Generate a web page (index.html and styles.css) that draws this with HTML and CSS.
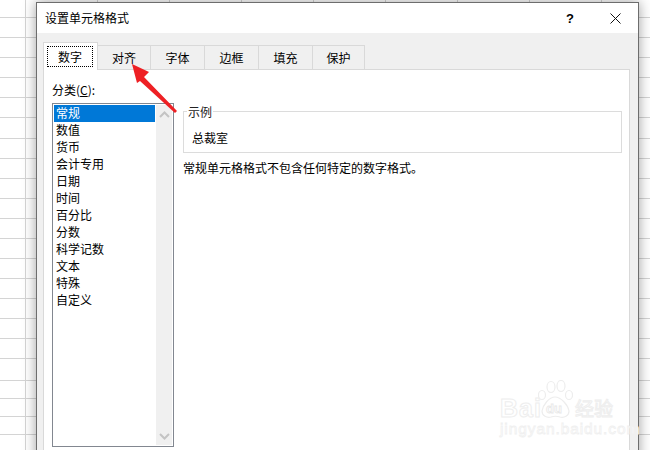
FILE: index.html
```html
<!DOCTYPE html>
<html lang="zh-CN">
<head>
<meta charset="utf-8">
<title>设置单元格格式</title>
<link rel="stylesheet" href="styles.css">
</head>
<body>
<div class="sheet">
  <div class="grid">
    <div class="r r18"></div>
    <div class="r"></div><div class="r"></div><div class="r"></div><div class="r"></div><div class="r"></div>
    <div class="r r21"></div>
    <div class="r"></div><div class="r"></div><div class="r"></div><div class="r"></div><div class="r"></div>
    <div class="r"></div><div class="r"></div><div class="r"></div><div class="r"></div><div class="r"></div><div class="r"></div>
    <div class="r r22"></div>
    <div class="r r18"></div><div class="r r18"></div><div class="r r18"></div>
  </div>

  <div class="dialog">
    <div class="titlebar">
      <span class="title">设置单元格格式</span>
      <span class="help">?</span>
      <svg class="close" width="11" height="11" viewBox="0 0 11 11"><path d="M0.5 0.5L10.5 10.5M10.5 0.5L0.5 10.5" stroke="#111" stroke-width="1" fill="none"/></svg>
    </div>
    <div class="body">
      <div class="tabs">
        <div class="tab tab-active"><span class="focus">数字</span></div>
        <div class="tab w53">对齐</div>
        <div class="tab">字体</div>
        <div class="tab">边框</div>
        <div class="tab">填充</div>
        <div class="tab w52">保护</div>
      </div>
      <div class="panel">
        <div class="left">
          <div class="label">分类(<u>C</u>):</div>
          <div class="list">
            <div class="items">
              <div class="item selected">常规</div>
              <div class="item">数值</div>
              <div class="item">货币</div>
              <div class="item">会计专用</div>
              <div class="item">日期</div>
              <div class="item">时间</div>
              <div class="item">百分比</div>
              <div class="item">分数</div>
              <div class="item">科学记数</div>
              <div class="item">文本</div>
              <div class="item">特殊</div>
              <div class="item">自定义</div>
            </div>
            <div class="scroll">
              <svg width="11" height="7" viewBox="0 0 11 7"><path d="M1 6L5.500 1.500L10 6" stroke="#c4c4c4" stroke-width="2" fill="none"/></svg>
              <svg width="11" height="7" viewBox="0 0 11 7"><path d="M1 1L5.500 5.500L10 1" stroke="#c4c4c4" stroke-width="2" fill="none"/></svg>
            </div>
          </div>
        </div>
        <div class="right">
          <div class="sample">
            <span class="legend">示例</span>
            <div class="sample-value">总裁室</div>
          </div>
          <div class="desc">常规单元格格式不包含任何特定的数字格式。</div>
        </div>
      </div>
    </div>
  </div>

  <svg class="arrow" width="60" height="60" viewBox="0 0 60 60"><polygon points="2,3 19,11 14,16 47,50 45,52 10,20 7,22" fill="#ee2024"/></svg>

  <div class="mark">
    <div class="mark-top">
      <span class="mark-bai">Bai</span>
      <svg class="paw" width="35" height="39" viewBox="0 0 35 39" fill="#fff" stroke="#ededed" stroke-width="1.200">
        <ellipse cx="4" cy="15" rx="3.500" ry="4.500"/>
        <ellipse cx="13" cy="7" rx="4" ry="5.500"/>
        <ellipse cx="23" cy="6" rx="4" ry="5.500"/>
        <ellipse cx="31" cy="15" rx="3.500" ry="4.500"/>
        <path d="M17 17C11 17 5 25 4 31C4 36 9 38 13 37C16 36 19 36 22 37C26 38 31 36 31 31C30 25 23 17 17 17Z"/>
        <text x="8" y="33" class="paw-du">du</text>
      </svg>
      <span class="mark-jy">经验</span>
    </div>
    <div class="mark-url">jingyan.baidu.com</div>
  </div>
</div>
</body>
</html>
```
FILE: styles.css
```css
* { box-sizing: border-box; }
html, body { margin: 0; padding: 0; }
body {
  width: 650px;
  height: 450px;
  overflow: hidden;
  font-family: "Noto Sans CJK SC", "Liberation Sans", sans-serif;
  font-size: 12px;
  color: #000;
}
.sheet {
  position: relative;
  width: 650px;
  height: 450px;
  overflow: hidden;
  background-color: #fff;
  background-image: repeating-linear-gradient(90deg, transparent 0, transparent 25px, #d4d4d4 25px, #d4d4d4 26px, transparent 26px, transparent 72px);
}
.grid { display: flex; flex-direction: column; }
.r { height: 20px; border-bottom: 1px solid #d4d4d4; flex: none; }
.r18 { height: 18px; }
.r21 { height: 21px; }
.r22 { height: 22px; }

.dialog {
  position: absolute;
  left: 36px;
  top: 2px;
  width: 603px;
  height: 500px;
  background: #f0f0f0;
  border: 1px solid #6d6d6d;
  box-shadow: 0 0 12px rgba(0, 0, 0, 0.38);
}
.titlebar {
  display: flex;
  align-items: center;
  height: 30px;
  background: #fff;
  padding: 0 17px 0 8px;
}
.title { flex: 1; line-height: 14px; font-size: 12px; padding-bottom: 1px; }
.help { font-family: "Liberation Sans", sans-serif; font-weight: bold; font-size: 13px; margin-right: 36px; }
.close { display: block; }

.body { padding: 9px 8px 0 6px; }
.tabs { display: flex; align-items: flex-end; height: 27px; }
.tab {
  width: 54px;
  height: 24px;
  display: flex;
  align-items: center;
  justify-content: center;
  border-top: 1px solid #d9d9d9;
  border-right: 1px solid #d9d9d9;
  line-height: 14px;
}
.w53 { width: 53px; }
.w52 { width: 52px; }
.tab-active {
  position: relative;
  z-index: 1;
  width: 55px;
  height: 28px;
  margin-bottom: -1px;
  background: #fff;
  border: 1px solid #d9d9d9;
  border-bottom: 0;
  padding: 3px 4px 3px 3px;
}
.focus {
  display: flex;
  align-items: center;
  justify-content: center;
  width: 47px;
  height: 21px;
  border: 1px dotted #000;
}
.panel {
  display: flex;
  gap: 9px;
  width: 587px;
  height: 400px;
  background: #fff;
  border: 1px solid #d9d9d9;
  padding: 13px 0 0 8px;
}
.left { width: 122px; flex: none; }
.label { line-height: 14px; margin-bottom: 6px; }
.list {
  display: flex;
  gap: 1px;
  width: 122px;
  height: 344px;
  border: 1px solid #828790;
  padding: 1px 0 1px 1px;
}
.items { width: 101px; }
.item { height: 17px; line-height: 15px; padding-left: 2px; }
.selected { background: #0078d7; color: #fff; }
.scroll {
  display: flex;
  flex-direction: column;
  justify-content: space-between;
  align-items: center;
  width: 16px;
  padding: 6px 0 5px;
  background: #f0f0f0;
}
.scroll svg { display: block; }

.right { width: 439px; flex: none; padding-top: 28px; }
.sample {
  position: relative;
  height: 42px;
  border: 1px solid #dcdcdc;
  padding: 19px 0 0 8px;
}
.legend {
  position: absolute;
  left: 3px;
  top: -7px;
  padding: 0 1px;
  line-height: 14px;
  background: #fff;
  color: #222;
}
.sample-value { line-height: 14px; }
.desc { margin-top: 8px; line-height: 14px; white-space: nowrap; }

.arrow { position: absolute; left: 130px; top: 61px; }

.mark {
  position: absolute;
  left: 500px;
  top: 380px;
  width: 116px;
  display: flex;
  flex-direction: column;
  color: #fff;
}
.mark-top { display: flex; align-items: flex-end; height: 39px; }
.mark-bai {
  font-family: "Liberation Sans", sans-serif;
  font-size: 25px;
  font-weight: bold;
  line-height: 22px;
  width: 38px;
  letter-spacing: 1px;
  -webkit-text-stroke: 1px #eeeeee;
}
.paw { display: block; flex: none; }
.paw-du {
  font-family: "Liberation Sans", sans-serif;
  font-size: 13px;
  font-weight: bold;
  fill: #fff;
  stroke: #e8e8e8;
  stroke-width: 0.800px;
}
.mark-jy {
  font-size: 19px;
  line-height: 22px;
  margin-left: 2px;
  white-space: nowrap;
  -webkit-text-stroke: 1px #eeeeee;
}
.mark-url {
  font-family: "Liberation Sans", sans-serif;
  font-size: 15.500px;
  line-height: 14px;
  margin-top: 3px;
  letter-spacing: 0.900px;
  white-space: nowrap;
  -webkit-text-stroke: 0.800px #f0f0f0;
}
```
